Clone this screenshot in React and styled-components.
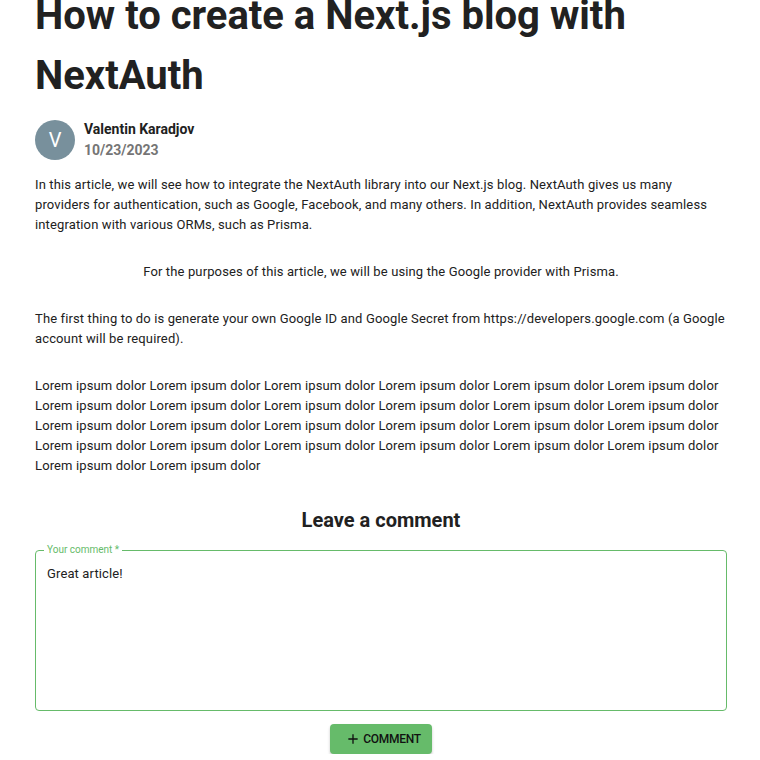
import React, { useState } from "react";
import styled, { createGlobalStyle } from "styled-components";

const GlobalStyle = createGlobalStyle`
  body {
    margin: 0;
    background: #fff;
    font-family: Roboto, "Liberation Sans", sans-serif;
    color: #212121;
    overflow: hidden;
  }
`;

const Page = styled.div`
  width: 692px;
  margin-left: 35px;
  margin-top: -14px;
`;

const Title = styled.h1`
  margin: 0;
  font-size: 40px;
  line-height: 60px;
  font-weight: 700;
  color: #212121;
`;

const Author = styled.div`
  display: flex;
  align-items: center;
  gap: 9px;
  margin-top: 13px;
`;

const Avatar = styled.div`
  width: 40px;
  height: 40px;
  border-radius: 50%;
  background: #78909c;
  color: #fff;
  display: flex;
  align-items: center;
  justify-content: center;
  font-size: 20px;
`;

const AuthorInfo = styled.div`
  display: flex;
  flex-direction: column;
  font-size: 14px;
  font-weight: 700;
  line-height: 21px;
`;

const Date = styled.span`
  color: #757575;
`;

const Paragraph = styled.p`
  margin: 14px 0 27px;
  font-size: 13px;
  line-height: 20px;
  letter-spacing: 0.13px;
  text-align: ${(p) => (p.$center ? "center" : "left")};
`;

const Body = styled.div`
  & > p + p {
    margin-top: 0;
  }
`;

const CommentTitle = styled.h2`
  margin: 30px 0 0;
  text-align: center;
  font-size: 20px;
  line-height: 28px;
  font-weight: 700;
`;

const Field = styled.fieldset`
  margin: 11px 0 0;
  padding: 0 11px;
  height: 166px;
  box-sizing: border-box;
  border: 1px solid #66bb6a;
  border-radius: 4px;
`;

const Legend = styled.legend`
  font-size: 10px;
  color: #66bb6a;
  padding: 0 3px;
  margin-left: -3px;
  line-height: 10px;
`;

const Input = styled.textarea`
  width: 100%;
  height: 130px;
  border: none;
  outline: none;
  resize: none;
  padding: 0;
  margin-top: 9px;
  font-family: Roboto, "Liberation Sans", sans-serif;
  font-size: 13px;
  line-height: 20px;
  letter-spacing: 0.13px;
  color: #212121;
  caret-color: #000;
`;

const Actions = styled.div`
  display: flex;
  justify-content: center;
  margin-top: 13px;
`;

const Button = styled.button`
  display: flex;
  align-items: center;
  gap: 2px;
  height: 30px;
  padding: 0 11px 0 15px;
  background: #66bb6a;
  border: none;
  border-radius: 4px;
  box-shadow: 0 2px 3px rgba(0, 0, 0, 0.22);
  color: #111;
  font-family: Roboto, "Liberation Sans", sans-serif;
  font-size: 12px;
  font-weight: 500;
  letter-spacing: -0.3px;
  cursor: pointer;
`;

const lorem = Array(26).fill("Lorem ipsum dolor").join(" ");

export default function App() {
  const [comment, setComment] = useState("Great article!");
  return (
    <>
      <GlobalStyle />
      <Page>
        <Title>How to create a Next.js blog with NextAuth</Title>
        <Author>
          <Avatar>V</Avatar>
          <AuthorInfo>
            <span>Valentin Karadjov</span>
            <Date>10/23/2023</Date>
          </AuthorInfo>
        </Author>
        <Body>
          <Paragraph>
            In this article, we will see how to integrate the NextAuth library into our Next.js blog. NextAuth gives us many
            providers for authentication, such as Google, Facebook, and many others. In addition, NextAuth provides seamless
            integration with various ORMs, such as Prisma.
          </Paragraph>
          <Paragraph $center>
            For the purposes of this article, we will be using the Google provider with Prisma.
          </Paragraph>
          <Paragraph>
            The first thing to do is generate your own Google ID and Google Secret from https://developers.google.com (a Google
            account will be required).
          </Paragraph>
          <Paragraph>{lorem}</Paragraph>
        </Body>
        <CommentTitle>Leave a comment</CommentTitle>
        <Field>
          <Legend>Your comment *</Legend>
          <Input value={comment} onChange={(e) => setComment(e.target.value)} />
        </Field>
        <Actions>
          <Button>
            <svg width="16" height="16" viewBox="0 0 24 24">
              <path d="M19 13h-6v6h-2v-6H5v-2h6V5h2v6h6v2z" fill="#111" />
            </svg>
            COMMENT
          </Button>
        </Actions>
      </Page>
    </>
  );
}
